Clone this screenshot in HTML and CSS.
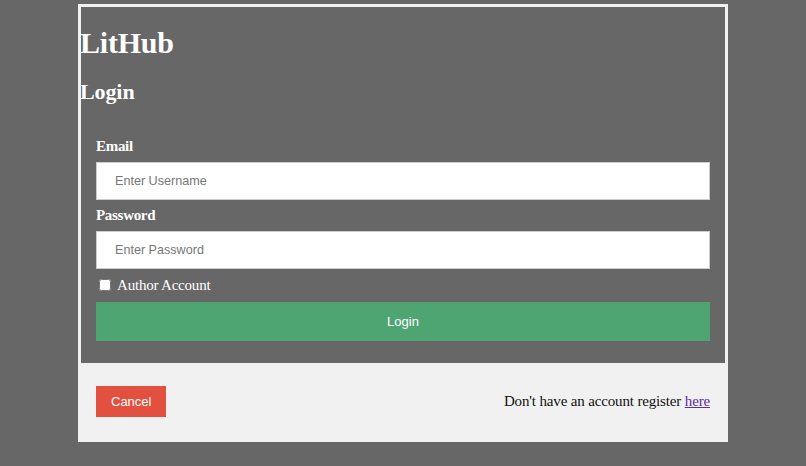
FILE: index.html
```html
<!DOCTYPE html>
<html lang="en">
<head>
<meta charset="utf-8">
<title>LitHub Login</title>
<link rel="stylesheet" href="styles.css">
</head>
<body>
<form class="modal">
  <h1 class="brand">LitHub</h1>
  <h2 class="title">Login</h2>
  <div class="fields">
    <label class="field-label" for="email">Email</label>
    <input class="text-input" id="email" type="text" placeholder="Enter Username">
    <label class="field-label" for="pw">Password</label>
    <input class="text-input" id="pw" type="password" placeholder="Enter Password">
    <div class="check-row">
      <input class="check" type="checkbox" id="author"><label for="author">Author Account</label>
    </div>
    <button class="login-btn" type="button">Login</button>
  </div>
  <div class="footer">
    <button class="cancel-btn" type="button">Cancel</button>
    <span class="register">Don't have an account register <a class="register-link" href="#">here</a></span>
  </div>
</form>
</body>
</html>
```
FILE: styles.css
```css
html, body {
  margin: 0;
  padding: 0;
  background: #676767;
}
body {
  font-family: "Liberation Serif", "Times New Roman", serif;
  color: #fff;
}
.modal {
  box-sizing: border-box;
  width: 650px;
  margin: 4px auto 0;
  border: 3px solid #f1f1f1;
  background: #676767;
}
.brand {
  font-size: 30px;
  letter-spacing: -0.2px;
  font-weight: bold;
  margin: 17px 0 17px -1px;
  line-height: 37px;
}
.title {
  font-size: 22px;
  letter-spacing: -0.1px;
  font-weight: bold;
  margin: 0 0 0 -1px;
  line-height: 28px;
}
.fields {
  padding: 33px 15px 14px;
  display: flex;
  flex-direction: column;
}
.field-label {
  display: block;
  font-size: 15px;
  letter-spacing: -0.3px;
  font-weight: bold;
  line-height: 15px;
}
.text-input {
  box-sizing: border-box;
  width: 100%;
  height: 38px;
  margin: 8px 0;
  padding: 0 18px;
  border: 1px solid #ccc;
  font-family: "Liberation Sans", Arial, sans-serif;
  font-size: 12.6px;
  color: #333;
  background: #fff;
}
.text-input::placeholder {
  color: #777;
}
.check-row {
  display: flex;
  align-items: center;
  font-size: 15px;
  letter-spacing: -0.2px;
  line-height: 17px;
}
.check {
  margin: 0 6px 1px 3px;
  width: 12px;
  height: 12px;
}
.login-btn {
  width: 100%;
  margin: 8px 0;
  padding: 12px 20px;
  border: none;
  background: #4fa572;
  color: #fff;
  font-family: "Liberation Sans", Arial, sans-serif;
  font-size: 13px;
  line-height: 15px;
}
.footer {
  background: #f1f1f1;
  padding: 16px 15px;
  display: flex;
  justify-content: space-between;
  align-items: center;
  color: #111;
}
.cancel-btn {
  margin: 7px 0 6px;
  padding: 8px 15px;
  border: none;
  background: #e2513f;
  color: #fff;
  font-family: "Liberation Sans", Arial, sans-serif;
  font-size: 13px;
  line-height: 15px;
  height: 31px;
}
.register {
  font-size: 15px;
  letter-spacing: -0.15px;
}
.register-link {
  color: #5a2f99;
}
```
